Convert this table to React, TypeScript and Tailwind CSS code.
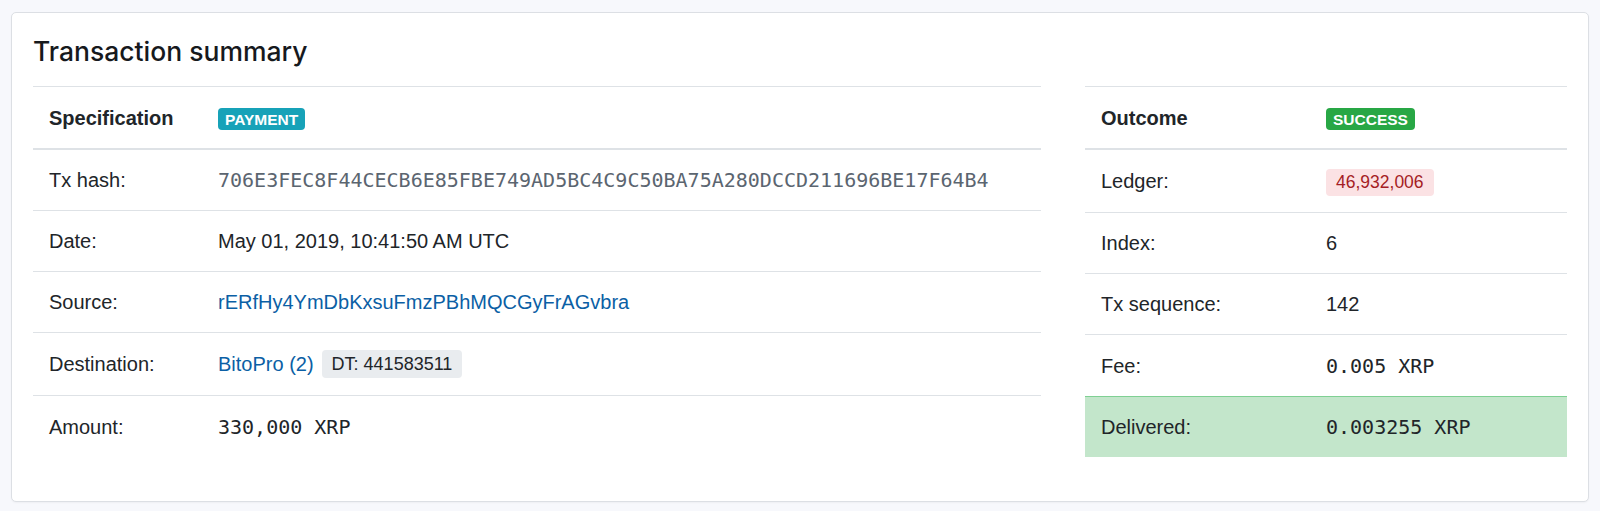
import type { ReactNode } from 'react'

type Row = {
  label: string
  value: ReactNode
  height?: string
  tone?: 'success'
  last?: boolean
}

const mono = "font-['DejaVu_Sans_Mono','Liberation_Mono',monospace]"

const specRows: Array<Row> = [
  {
    label: 'Tx hash:',
    value: (
      <span className={`${mono} text-[20px] text-[#5b6570]`}>
        706E3FEC8F44CECB6E85FBE749AD5BC4C9C50BA75A280DCCD211696BE17F64B4
      </span>
    ),
  },
  { label: 'Date:', value: 'May 01, 2019, 10:41:50 AM UTC' },
  {
    label: 'Source:',
    value: (
      <a href="#" className="text-[#0b5fa5]">
        rERfHy4YmDbKxsuFmzPBhMQCGyFrAGvbra
      </a>
    ),
  },
  {
    label: 'Destination:',
    height: 'h-[63px]',
    value: (
      <span className="flex items-center gap-[8px]">
        <a href="#" className="text-[#0b5fa5]">
          BitoPro (2)
        </a>
        <span className="inline-flex h-[28px] items-center rounded-[4px] bg-[#e9ecef] px-[10px] text-[18px] text-[#212529]">
          DT: 441583511
        </span>
      </span>
    ),
  },
  {
    label: 'Amount:',
    last: true,
    value: <span className={`${mono} text-[20px]`}>330,000 XRP</span>,
  },
]

const outcomeRows: Array<Row> = [
  {
    label: 'Ledger:',
    height: 'h-[63px]',
    value: (
      <span className="inline-flex h-[27px] items-center rounded-[4px] bg-[#fbe2e4] px-[10px] text-[17.5px] text-[#a51d24]">
        46,932,006
      </span>
    ),
  },
  { label: 'Index:', value: '6' },
  { label: 'Tx sequence:', value: '142' },
  {
    label: 'Fee:',
    last: true,
    value: <span className={`${mono} text-[20px]`}>0.005 XRP</span>,
  },
  {
    label: 'Delivered:',
    tone: 'success',
    last: true,
    value: <span className={`${mono} text-[20px]`}>0.003255 XRP</span>,
  },
]

function Badge({ children, color }: { children: ReactNode; color: string }) {
  return (
    <span
      className={`inline-flex h-[22px] items-center rounded-[4px] px-[7px] text-[15.5px] font-bold leading-none text-white ${color}`}
    >
      {children}
    </span>
  )
}

function SummaryTable({
  title,
  badge,
  rows,
  labelWidth,
  className,
}: {
  title: string
  badge: ReactNode
  rows: Array<Row>
  labelWidth: string
  className: string
}) {
  return (
    <div className={`border-t border-[#dee2e6] ${className}`}>
      <div className="flex h-[63px] items-center border-b-2 border-[#dee2e6]">
        <div className={`${labelWidth} shrink-0 pl-4 font-bold`}>{title}</div>
        <div>{badge}</div>
      </div>
      {rows.map((row) => (
        <div
          key={row.label}
          className={`flex items-center ${row.height ?? 'h-[61px]'} ${
            row.tone === 'success'
              ? 'border-t border-[#7fd093] bg-[#c3e6cb]'
              : row.last
                ? ''
                : 'border-b border-[#dee2e6]'
          }`}
        >
          <div className={`${labelWidth} shrink-0 pl-4`}>{row.label}</div>
          <div className="min-w-0 whitespace-nowrap">{row.value}</div>
        </div>
      ))}
    </div>
  )
}

export default function App() {
  return (
    <div className="h-[511px] bg-[#f7f8fc] px-[11px] pt-[12px] font-['Liberation_Sans',Arial,sans-serif] text-[20px] leading-[30px] text-[#212529]">
      <div className="rounded-[5px] border border-[#dcdfe4] bg-white px-[21px] pb-[44px] pt-[21px] shadow-[0_1px_2px_rgba(0,0,0,0.04)]">
        <h4 className="mb-[18px] font-['Inter','Liberation_Sans',sans-serif] text-[26.5px] font-medium leading-[34px] text-[#16191d]">
          Transaction summary
        </h4>
        <div className="flex gap-[44px]">
          <SummaryTable
            className="flex-1"
            title="Specification"
            badge={<Badge color="bg-[#17a2b8]">PAYMENT</Badge>}
            rows={specRows}
            labelWidth="w-[185px]"
          />
          <SummaryTable
            className="w-[482px]"
            title="Outcome"
            badge={<Badge color="bg-[#28a745]">SUCCESS</Badge>}
            rows={outcomeRows}
            labelWidth="w-[241px]"
          />
        </div>
      </div>
    </div>
  )
}
